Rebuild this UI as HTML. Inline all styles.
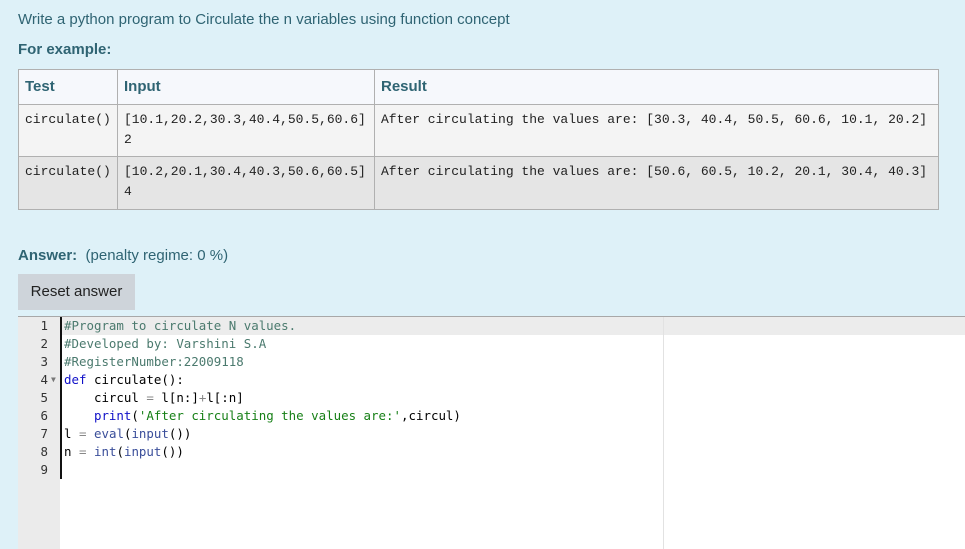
<!DOCTYPE html>
<html><head><style>
body{margin:0;width:965px;height:548px;background:#def1f8;font-family:"Liberation Sans",sans-serif;position:relative;overflow:hidden;color:#2f6473}
.abs{position:absolute}
table{border-collapse:collapse;position:absolute;left:18px;top:69px;width:921px}
td,th{border:1px solid #b0b0b0;font-family:"Liberation Mono",monospace;font-size:13px;color:#222;text-align:left;vertical-align:top;padding:0 6px;line-height:20px}
th{font-family:"Liberation Sans",sans-serif;font-weight:bold;color:#2f6473;font-size:15px;height:34px;line-height:34px;padding:0 6px;box-sizing:border-box;background:#f6f8fc}
tr.r1 td{background:#f4f4f4;height:52px;padding-top:5px;box-sizing:border-box}
tr.r2 td{background:#e5e5e5;height:53px;padding-top:5px;box-sizing:border-box}
.ed{position:absolute;left:18px;top:316px;width:947px;height:232px;background:#fff;border-top:1px solid #a8a8a8}
.gut{position:absolute;left:0;top:0;width:42px;height:232px;background:#ebebeb}
.line{position:absolute;left:0;height:18px;line-height:18px;font-family:"DejaVu Sans Mono",monospace;font-size:12.45px;white-space:pre;color:#000}
.num{position:absolute;width:30px;text-align:right;left:0;color:#333}
.c{color:#4b7a6e}.k{color:#1010c8}.s{color:#178017}.b{color:#3a4e9a}.o{color:#888}
</style></head><body>
<div class="abs" style="left:18px;top:11px;font-size:15px">Write a python program to Circulate the n variables using function concept</div>
<div class="abs" style="left:18px;top:41px;font-size:15px;font-weight:bold">For example:</div>
<table>
<tr><th style="width:99px">Test</th><th style="width:257px">Input</th><th>Result</th></tr>
<tr class="r1"><td>circulate()</td><td>[10.1,20.2,30.3,40.4,50.5,60.6]<br>2</td><td>After circulating the values are: [30.3, 40.4, 50.5, 60.6, 10.1, 20.2]</td></tr>
<tr class="r2"><td>circulate()</td><td>[10.2,20.1,30.4,40.3,50.6,60.5]<br>4</td><td>After circulating the values are: [50.6, 60.5, 10.2, 20.1, 30.4, 40.3]</td></tr>
</table>
<div class="abs" style="left:18px;top:247px;font-size:15px"><b>Answer:</b>&nbsp; (penalty regime: 0 %)</div>
<div class="abs" style="left:18px;top:274px;width:117px;height:36px;background:#ced4da;color:#222;font-size:15px;line-height:36px;text-align:center">Reset answer</div>
<div class="ed">
<div class="gut"></div>
<div class="abs" style="left:42px;top:0;width:905px;height:18px;background:#ececec"></div>
<div class="abs" style="left:645px;top:0;width:1px;height:232px;background:#e2e2e2"></div>
<div class="abs" style="left:42px;top:0;width:2px;height:162px;background:#111"></div>
<div class="line" style="top:0"><span class="num">1</span></div>
<div class="line" style="top:18px"><span class="num">2</span></div>
<div class="line" style="top:36px"><span class="num">3</span></div>
<div class="line" style="top:54px"><span class="num">4</span><span class="abs" style="left:33px;font-size:8px;color:#777">▼</span></div>
<div class="line" style="top:72px"><span class="num">5</span></div>
<div class="line" style="top:90px"><span class="num">6</span></div>
<div class="line" style="top:108px"><span class="num">7</span></div>
<div class="line" style="top:126px"><span class="num">8</span></div>
<div class="line" style="top:144px"><span class="num">9</span></div>
<div class="line" style="top:0;left:46px"><span class="c">#Program to circulate N values.</span></div>
<div class="line" style="top:18px;left:46px"><span class="c">#Developed by: Varshini S.A</span></div>
<div class="line" style="top:36px;left:46px"><span class="c">#RegisterNumber:22009118</span></div>
<div class="line" style="top:54px;left:46px"><span class="k">def</span> circulate():</div>
<div class="line" style="top:72px;left:46px">    circul <span class="o">=</span> l[n:]<span class="o">+</span>l[:n]</div>
<div class="line" style="top:90px;left:46px">    <span class="k">print</span>(<span class="s">'After circulating the values are:'</span>,circul)</div>
<div class="line" style="top:108px;left:46px">l <span class="o">=</span> <span class="b">eval</span>(<span class="b">input</span>())</div>
<div class="line" style="top:126px;left:46px">n <span class="o">=</span> <span class="b">int</span>(<span class="b">input</span>())</div>
</div>
</body></html>
